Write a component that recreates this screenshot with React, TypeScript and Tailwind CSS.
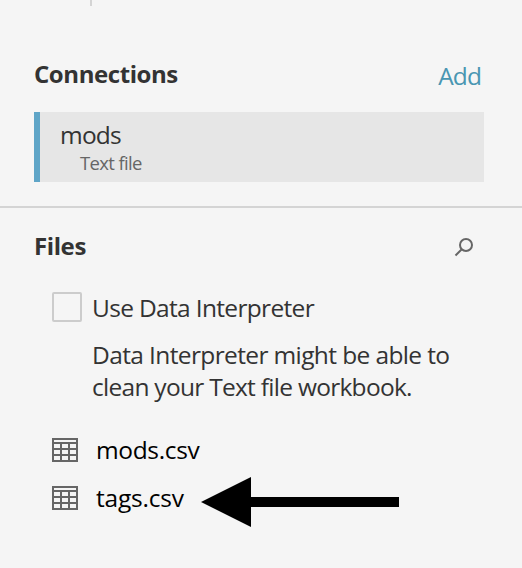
import React from "react";

function TableIcon() {
  return (
    <svg width="26" height="24" viewBox="0 0 26 24" fill="none" stroke="#666" strokeWidth="2" className="block shrink-0">
      <path d="M1 1H25V23H1ZM0 5H26M0 11H26M0 17H26M9 5V24M17 5V24" />
    </svg>
  );
}

function FileRow({ name, label }: { name: string; label: string }) {
  return (
    <div className="flex h-12 items-center">
      <TableIcon />
      <span className={`ml-[18px] whitespace-nowrap text-[24.5px] leading-8 text-black ${label}`}>{name}</span>
    </div>
  );
}

export default function App() {
  return (
    <div className="flex h-[568px] w-[522px] flex-col overflow-hidden bg-[#f5f5f5] font-['Open_Sans',sans-serif] text-[#333]">
      <div className="ml-[90px] h-1.5 w-0.5 shrink-0 bg-[#d4d4d4]" />
      <section className="h-[202px] shrink-0 border-b-2 border-[#d4d4d4] pt-[52px] pr-[38px] pl-[34px]">
        <div className="flex h-[54px] justify-between">
          <h2 className="text-[24px] leading-8 font-bold tracking-[-0.43px]">Connections</h2>
          <button className="mt-0.5 mr-[3px] h-8 text-[24.5px] leading-8 tracking-[-0.9px] text-[#4996b2]">Add</button>
        </div>
        <div className="h-[70px] border-l-[6px] border-[#5fa5c7] bg-[#e6e6e6] pt-[7px] pl-5">
          <div className="text-[24.5px] leading-8 tracking-[-0.8px]">mods</div>
          <div className="pl-5 text-[18.5px] leading-6 tracking-[-0.65px] text-[#666]">Text file</div>
        </div>
      </section>
      <section className="pt-[22px] pl-[34px]">
        <div className="flex h-8 items-center justify-between pr-[48px]">
          <h2 className="text-[24px] leading-8 font-bold tracking-[-0.4px]">Files</h2>
          <svg width="20" height="20" viewBox="0 0 20 20" fill="none" stroke="#666" strokeWidth="2" className="mt-0.5">
            <circle cx="12" cy="8" r="6" />
            <path d="M7.5 12.5L1.5 18.5" />
          </svg>
        </div>
        <div className="pt-[30px] pl-[18px]">
          <div className="flex h-[30px]">
            <span className="h-[30px] w-[30px] shrink-0 rounded-[2px] border-2 border-[#ccc]" />
            <span className="ml-2.5 text-[24.5px] leading-8 tracking-[-0.67px] whitespace-nowrap">Use Data Interpreter</span>
          </div>
          <p className="mt-[17px] ml-10 text-[24.5px] leading-8 whitespace-nowrap">
            <span className="block tracking-[-0.62px]">Data Interpreter might be able to</span>
            <span className="block tracking-[-0.72px]">clean your Text file workbook.</span>
          </p>
          <div className="mt-[23px]">
            <FileRow name="mods.csv" label="tracking-[-0.35px]" />
            <div className="flex h-12 items-center">
              <FileRow name="tags.csv" label="tracking-[-0.2px]" />
              <svg width="198" height="50" viewBox="0 0 198 50" className="mt-2 ml-[17px] block shrink-0" fill="#000">
                <path d="M0 25L50 0V20H198V30H50V50Z" />
              </svg>
            </div>
          </div>
        </div>
      </section>
    </div>
  );
}
